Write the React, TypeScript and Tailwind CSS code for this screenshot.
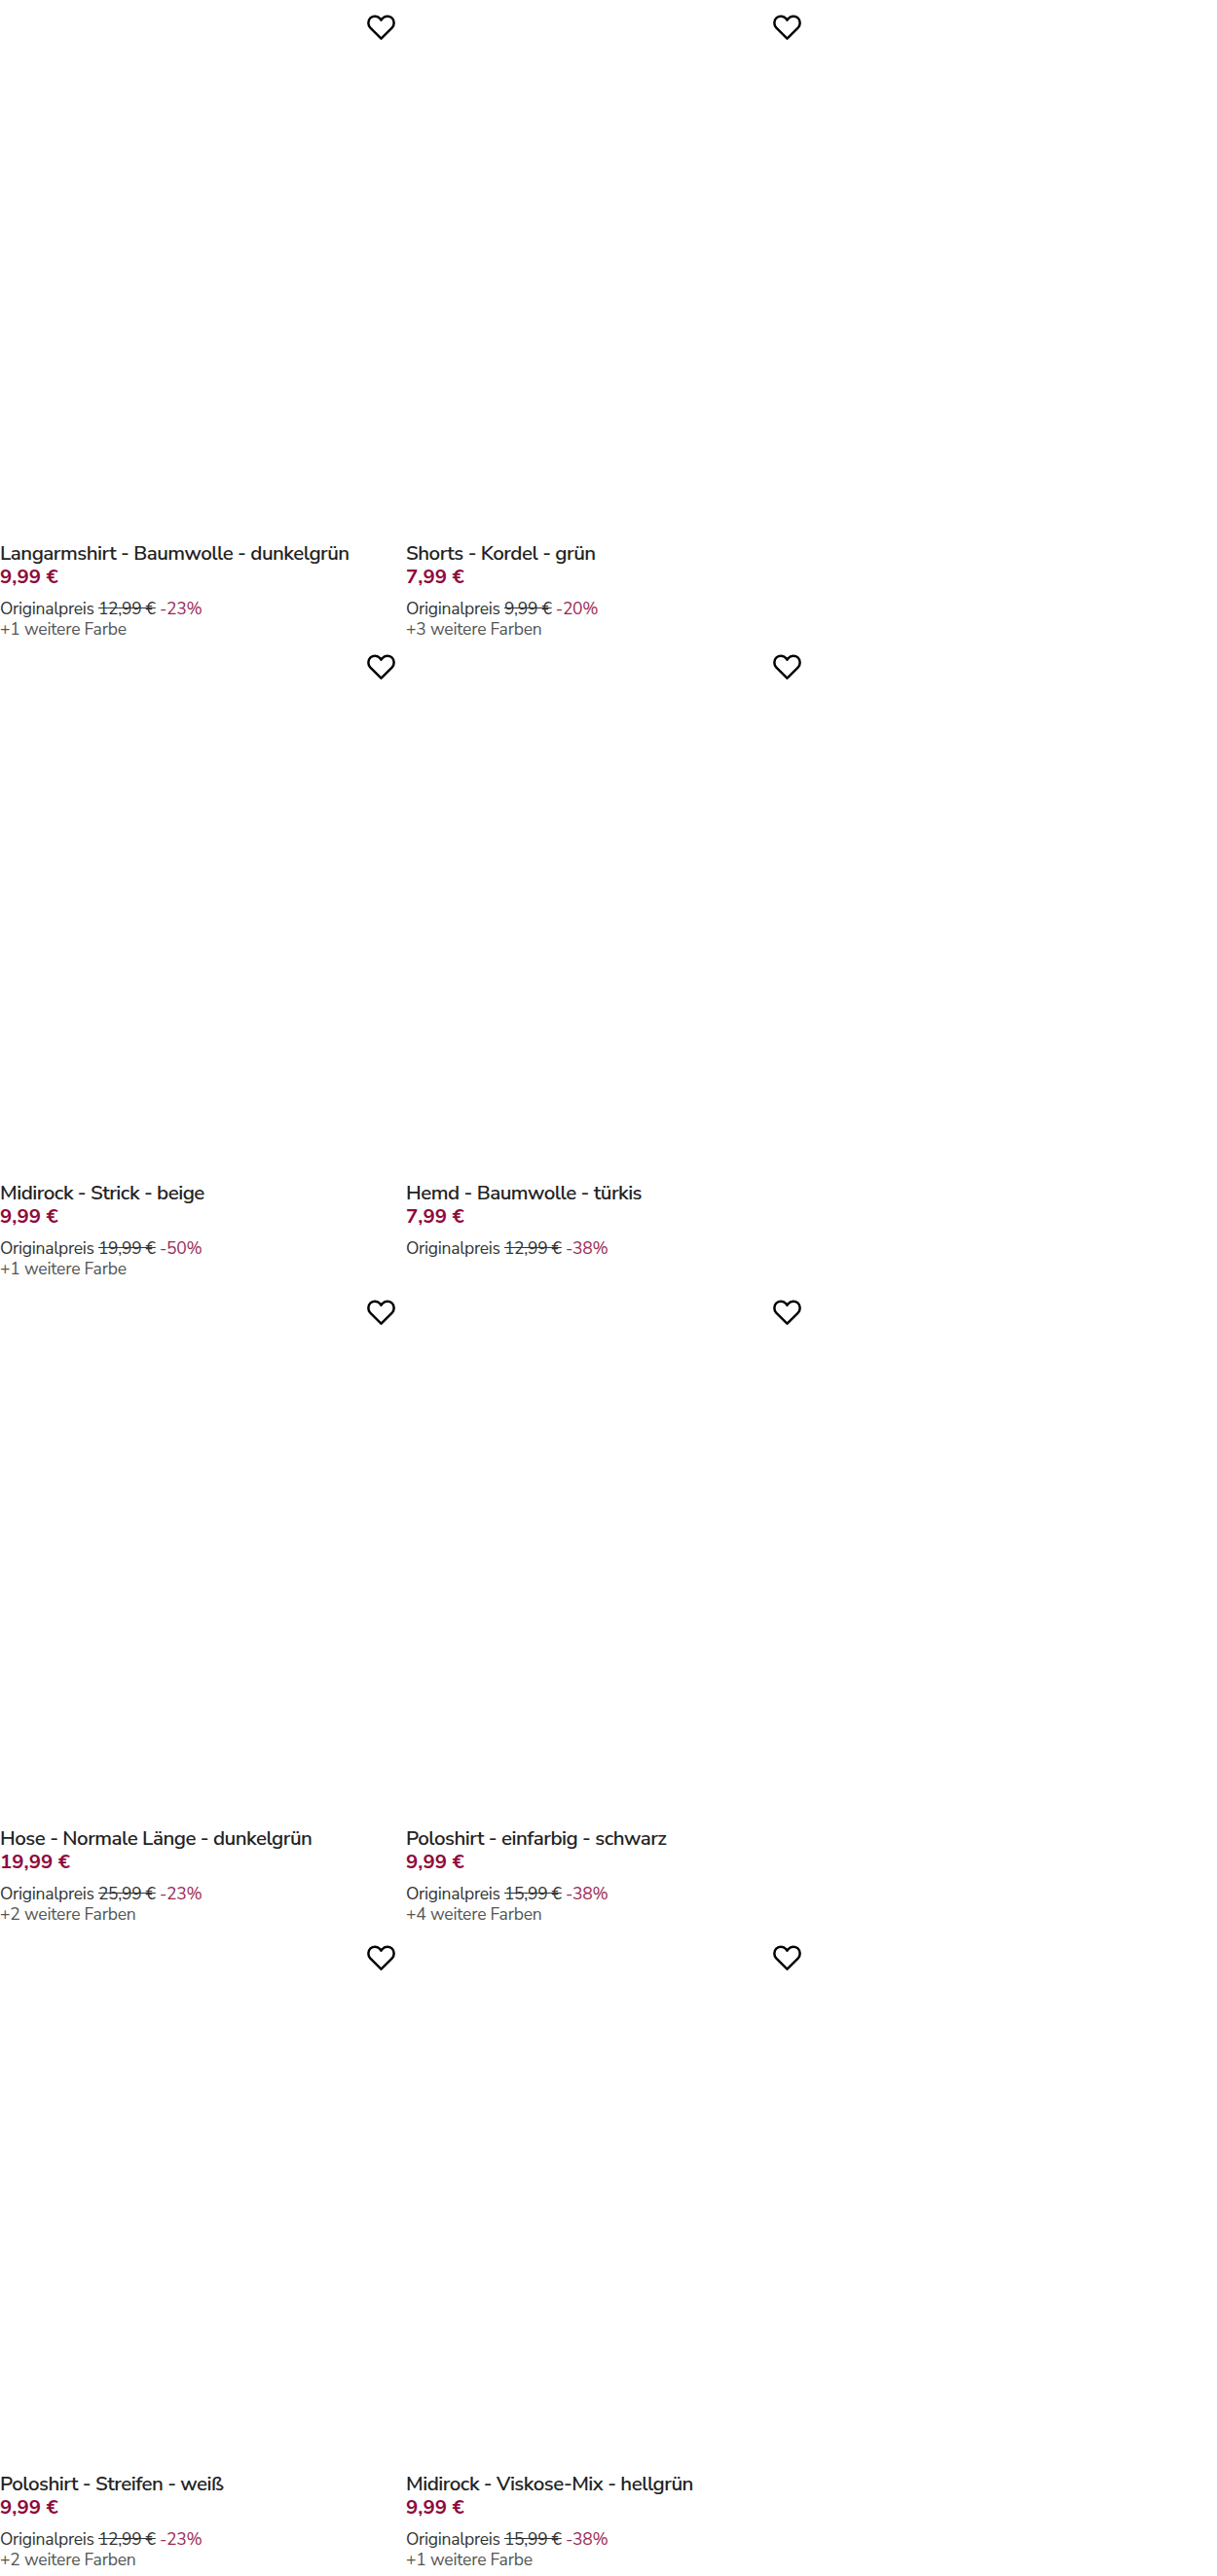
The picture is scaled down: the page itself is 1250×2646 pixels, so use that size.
const products = [
  { title: "Langarmshirt - Baumwolle - dunkelgrün", price: "9,99 €", old: "12,99 €", off: "-23%", more: "+1 weitere Farbe" },
  { title: "Shorts - Kordel - grün", price: "7,99 €", old: "9,99 €", off: "-20%", more: "+3 weitere Farben" },
  { title: "Midirock - Strick - beige", price: "9,99 €", old: "19,99 €", off: "-50%", more: "+1 weitere Farbe" },
  { title: "Hemd - Baumwolle - türkis", price: "7,99 €", old: "12,99 €", off: "-38%", more: "" },
  { title: "Hose - Normale Länge - dunkelgrün", price: "19,99 €", old: "25,99 €", off: "-23%", more: "+2 weitere Farben" },
  { title: "Poloshirt - einfarbig - schwarz", price: "9,99 €", old: "15,99 €", off: "-38%", more: "+4 weitere Farben" },
  { title: "Poloshirt - Streifen - weiß", price: "9,99 €", old: "12,99 €", off: "-23%", more: "+2 weitere Farben" },
  { title: "Midirock - Viskose-Mix - hellgrün", price: "9,99 €", old: "15,99 €", off: "-38%", more: "+1 weitere Farbe" },
];

function Heart() {
  return (
    <svg viewBox="0 0 29 26" className="h-[26px] w-[29px]" fill="none" stroke="#000" strokeWidth="2.5" strokeLinejoin="round">
      <path d="M14.5 24.6 3.4 13.6C.6 10.8.7 6 3.5 3.4c2.9-2.6 7.3-2.2 9.7.6l1.3 1.6 1.3-1.6c2.4-2.8 6.8-3.2 9.7-.6 2.8 2.6 2.9 7.4.1 10.2L14.5 24.6Z" />
    </svg>
  );
}

function Tile({ p, first }: { p: (typeof products)[number]; first: boolean }) {
  return (
    <div className={first ? "flex h-[657px] flex-col" : "flex h-[663px] flex-col"}>
      <div className="flex h-[556px] justify-end pr-[11px] pt-[15px]">
        <Heart />
      </div>
      <div className="text-[20.5px] font-semibold leading-[24px] tracking-[-0.5px] text-[#222]">{p.title}</div>
      <div className="text-[20.5px] font-bold leading-[24px] text-[#8f0a3c]">{p.price}</div>
      <div className="mt-[11px] text-[17.5px] leading-[21px] tracking-[-0.3px] text-[#333]">
        Originalpreis <span className="line-through">{p.old}</span> <span className="text-[#9b2a52]">{p.off}</span>
      </div>
      <div className="text-[17.5px] leading-[21px] tracking-[-0.2px] text-[#555]">{p.more}</div>
    </div>
  );
}

export default function App() {
  return (
    <div className="h-[2646px] overflow-hidden bg-white font-['Nunito_Sans','Noto_Sans',sans-serif]">
      <div className="grid w-[834px] grid-cols-2">
        {products.map((p, i) => (
          <Tile key={p.title} p={p} first={i < 2} />
        ))}
      </div>
    </div>
  );
}
